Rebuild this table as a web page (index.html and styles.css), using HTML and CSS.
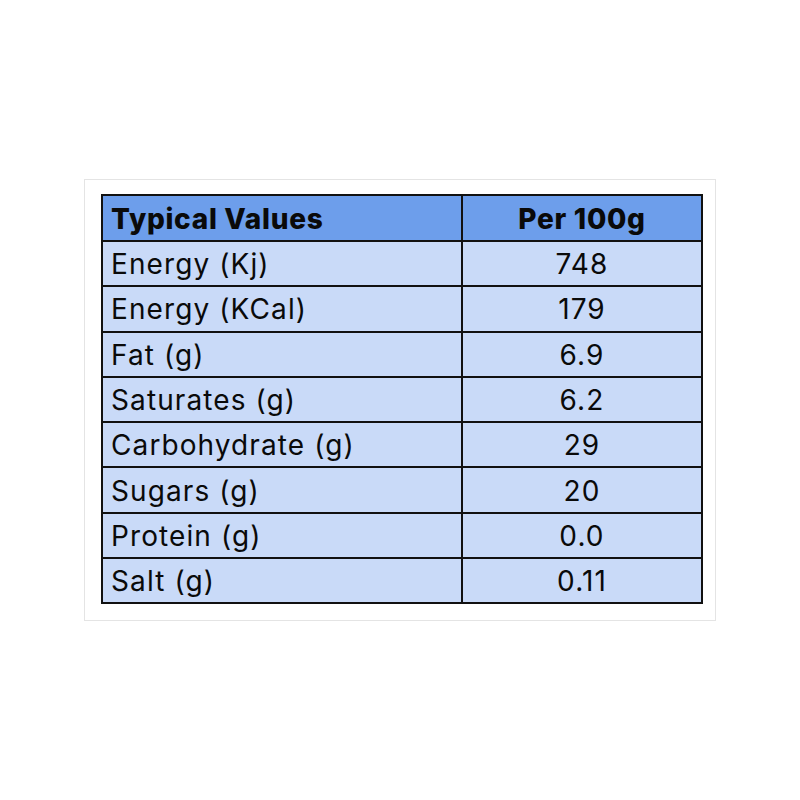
FILE: index.html
```html
<!DOCTYPE html>
<html>
<head>
<meta charset="utf-8">
<link rel="stylesheet" href="styles.css">
</head>
<body>
<div class="card">
  <table class="nutrition">
    <colgroup>
      <col class="col-name">
      <col class="col-value">
    </colgroup>
    <thead>
      <tr class="head-row">
        <th class="name">Typical Values</th>
        <th class="value">Per 100g</th>
      </tr>
    </thead>
    <tbody>
      <tr><td class="name">Energy (Kj)</td><td class="value">748</td></tr>
      <tr><td class="name">Energy (KCal)</td><td class="value">179</td></tr>
      <tr><td class="name">Fat (g)</td><td class="value">6.9</td></tr>
      <tr><td class="name">Saturates (g)</td><td class="value">6.2</td></tr>
      <tr><td class="name">Carbohydrate (g)</td><td class="value">29</td></tr>
      <tr><td class="name">Sugars (g)</td><td class="value">20</td></tr>
      <tr><td class="name">Protein (g)</td><td class="value">0.0</td></tr>
      <tr><td class="name">Salt (g)</td><td class="value">0.11</td></tr>
    </tbody>
  </table>
</div>
</body>
</html>
```
FILE: styles.css
```css
html, body {
  margin: 0;
  padding: 0;
  background: #ffffff;
}
body {
  font-family: "Inter", "Noto Sans", sans-serif;
  color: #0a0a0a;
  padding: 179px 0 0 84px;
}
.card {
  box-sizing: border-box;
  width: 632px;
  height: 442px;
  border: 1px solid #e4e4e4;
  padding: 14px 12px 0 16px;
  background: #fff;
}
.nutrition {
  border-collapse: collapse;
  table-layout: fixed;
  width: 602px;
  border: 2px solid #111;
}
.col-name {
  width: 360px;
}
.col-value {
  width: 240px;
}
.nutrition th,
.nutrition td {
  border: 2px solid #111;
  background: #c9daf8;
  height: 45.3px;
  padding: 1px 8px 0 8px;
  box-sizing: border-box;
  font-size: 28px;
  font-weight: 400;
  line-height: 1;
  vertical-align: middle;
  letter-spacing: 1.1px;
  white-space: nowrap;
}
.nutrition th {
  background: #6d9eeb;
  font-weight: 800;
  height: 46px;
  letter-spacing: 0.7px;
}
.nutrition .name {
  text-align: left;
}
.nutrition .value {
  text-align: center;
}
```
